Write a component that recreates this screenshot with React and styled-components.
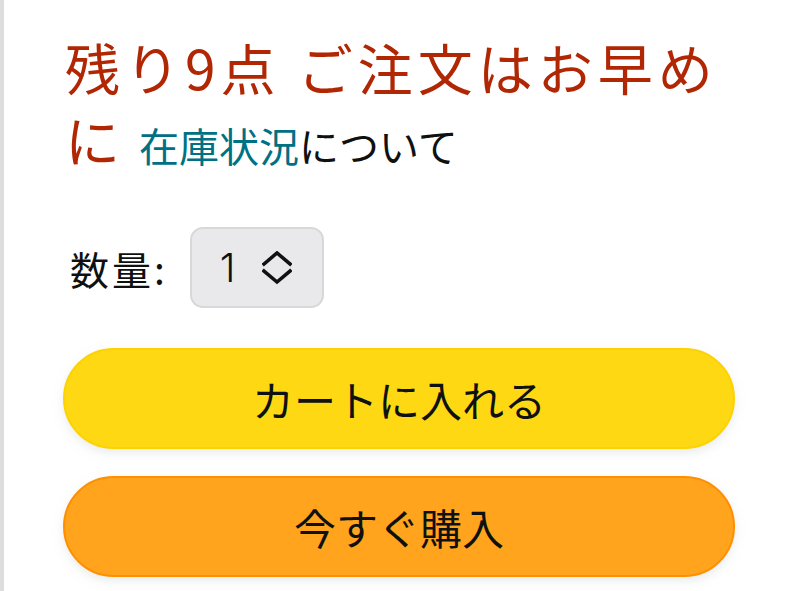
import React from "react";
import styled, { createGlobalStyle } from "styled-components";

const Global = createGlobalStyle`
  html, body { margin: 0; padding: 0; background: #ffffff; }
  body { font-family: "Noto Sans CJK JP", "Noto Sans", sans-serif; color: #0f1111; }
`;

const Panel = styled.div`
  border-left: 4px solid #dddddd;
  min-height: 591px;
  box-sizing: border-box;
  padding: 30px 58px 0 59px;
  display: flex;
  flex-direction: column;
`;

const Stock = styled.div`
  font-size: 55px;
  line-height: 72px;
  letter-spacing: 5px;
  color: #b12704;
  padding-left: 2px;
`;

const Note = styled.span`
  display: inline-block;
  font-size: 40px;
  line-height: 56px;
  letter-spacing: 0;
  color: #0f1111;
  margin-left: 14px;
`;

const Link = styled.a`
  color: #007185;
  text-decoration: none;
`;

const QtyRow = styled.div`
  display: flex;
  align-items: center;
  gap: 22px;
  margin-top: 53px;
  padding-left: 7px;
`;

const QtyLabel = styled.span`
  font-size: 39px;
  letter-spacing: 3px;
  color: #0f1111;
`;

const Select = styled.div`
  box-sizing: border-box;
  width: 134px;
  height: 81px;
  border: 2px solid #d8d8da;
  border-radius: 13px;
  background: #e9e9eb;
  display: flex;
  align-items: center;
  padding-left: 28px;
  gap: 26px;
  font-family: Inter, "Noto Sans", sans-serif;
  font-size: 40px;
  font-weight: 300;
  color: #0f1111;
`;

const Buttons = styled.div`
  display: flex;
  flex-direction: column;
  gap: 27px;
  margin-top: 40px;
`;

const Button = styled.button`
  box-sizing: border-box;
  height: 101px;
  width: 100%;
  border-radius: 51px;
  border: 2px solid ${(p) => p.$border};
  background: ${(p) => p.$bg};
  box-shadow: 0 4px 10px rgba(213, 217, 217, 0.5);
  font-family: "Noto Sans CJK JP", "Noto Sans", sans-serif;
  font-size: 42px;
  color: #0f1111;
  display: flex;
  align-items: center;
  justify-content: center;
  padding: 0;
`;

const Chevrons = () => (
  <svg width="30" height="34" viewBox="0 0 30 34" fill="none">
    <polyline points="2,13 15,2 28,13" stroke="#111" strokeWidth="3.6" strokeLinecap="square" strokeLinejoin="miter" />
    <polyline points="2,20 15,31 28,20" stroke="#111" strokeWidth="3.6" strokeLinecap="square" strokeLinejoin="miter" />
  </svg>
);

export default function App() {
  return (
    <>
      <Global />
      <Panel>
        <Stock>
          残り9点 ご注文はお早めに
          <Note>
            <Link href="#">在庫状況</Link>について
          </Note>
        </Stock>
        <QtyRow>
          <QtyLabel>数量:</QtyLabel>
          <Select>
            <span>1</span>
            <Chevrons />
          </Select>
        </QtyRow>
        <Buttons>
          <Button $bg="#ffd814" $border="#fcd200">カートに入れる</Button>
          <Button $bg="#ffa41c" $border="#ff8f00">今すぐ購入</Button>
        </Buttons>
      </Panel>
    </>
  );
}
